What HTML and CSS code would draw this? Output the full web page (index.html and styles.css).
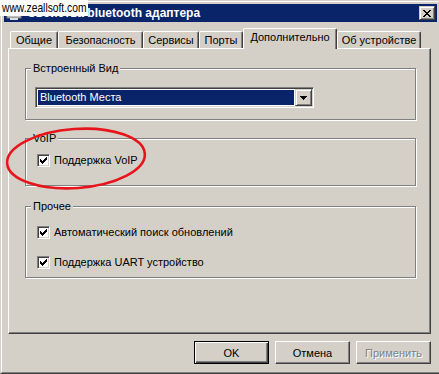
FILE: index.html
```html
<!DOCTYPE html>
<html lang="ru">
  <head>
    <meta charset="UTF-8" />
    <title>Свойства bluetooth адаптера</title>
    <link rel="stylesheet" href="styles.css">
  </head>
  <body>
    <div class="window">
      <div class="frame">
        <div class="titlebar">
          <svg class="title-icon" viewBox="0 0 16 16" width="16" height="16">
            <rect x="1" y="2" width="14" height="11" fill="#c0c0c0" stroke="#808080" />
            <rect x="3" y="4" width="10" height="7" fill="#ffffff" />
            <rect x="4" y="13" width="8" height="2" fill="#e0e0e0" />
          </svg>
          <span class="title-text">Свойства bluetooth адаптера</span>
          <button class="title-close">
            <svg viewBox="0 0 8 7" width="8" height="7" shape-rendering="crispEdges">
              <path d="M0 0h2v1h-2z M6 0h2v1h-2z M1 1h2v1h-2z M5 1h2v1h-2z M2 2h4v1h-4z M3 3h2v1h-2z M2 4h4v1h-4z M1 5h2v1h-2z M5 5h2v1h-2z M0 6h2v1h-2z M6 6h2v1h-2z" fill="#000" />
            </svg>
          </button>
        </div>

        <div class="tabs">
          <div class="tab tab-general">Общие</div>
          <div class="tab tab-security">Безопасность</div>
          <div class="tab tab-services">Сервисы</div>
          <div class="tab tab-ports">Порты</div>
          <div class="tab tab-extra tab-active">Дополнительно</div>
          <div class="tab tab-device">Об устройстве</div>
        </div>

        <div class="page">
          <div class="group group-view">
            <div class="group-title">Встроенный Вид</div>
            <div class="combo">
              <div class="combo-value">Bluetooth Места</div>
              <div class="combo-button">
                <svg viewBox="0 0 7 4" width="7" height="4" shape-rendering="crispEdges">
                  <path d="M0 0h7v1h-7z M1 1h5v1h-5z M2 2h3v1h-3z M3 3h1v1h-1z" fill="#000" />
                </svg>
              </div>
            </div>
          </div>

          <div class="group group-voip">
            <div class="group-title">VoIP</div>
            <label class="check">
              <span class="checkbox">
                <svg viewBox="0 0 7 7" width="7" height="7" shape-rendering="crispEdges">
                  <path d="M6 0h1v1h-1z M5 1h2v1h-2z M0 2h1v1h-1z M4 2h3v1h-3z M0 3h2v1h-2z M3 3h3v1h-3z M0 4h5v1h-5z M1 5h3v1h-3z M2 6h1v1h-1z" fill="#000" />
                </svg>
              </span>
              <span class="check-text">Поддержка VoIP</span>
            </label>
          </div>

          <div class="group group-misc">
            <div class="group-title">Прочее</div>
            <label class="check">
              <span class="checkbox">
                <svg viewBox="0 0 7 7" width="7" height="7" shape-rendering="crispEdges">
                  <path d="M6 0h1v1h-1z M5 1h2v1h-2z M0 2h1v1h-1z M4 2h3v1h-3z M0 3h2v1h-2z M3 3h3v1h-3z M0 4h5v1h-5z M1 5h3v1h-3z M2 6h1v1h-1z" fill="#000" />
                </svg>
              </span>
              <span class="check-text">Автоматический поиск обновлений</span>
            </label>
            <label class="check">
              <span class="checkbox">
                <svg viewBox="0 0 7 7" width="7" height="7" shape-rendering="crispEdges">
                  <path d="M6 0h1v1h-1z M5 1h2v1h-2z M0 2h1v1h-1z M4 2h3v1h-3z M0 3h2v1h-2z M3 3h3v1h-3z M0 4h5v1h-5z M1 5h3v1h-3z M2 6h1v1h-1z" fill="#000" />
                </svg>
              </span>
              <span class="check-text">Поддержка UART устройство</span>
            </label>
          </div>
        </div>

        <div class="actions">
          <button class="btn btn-default">OK</button>
          <button class="btn">Отмена</button>
          <button class="btn" disabled>Применить</button>
        </div>
      </div>
    </div>

    <!-- watermark and hand-drawn mark lie over the dialog -->
    <div class="watermark"><span>www.zeallsoft.com</span></div>
    <svg class="annotation" width="439" height="374" viewBox="0 0 439 374">
      <ellipse cx="76" cy="158.5" rx="69" ry="29.5" transform="rotate(-4 76 158.5)" fill="none" stroke="#e8141c" stroke-width="2.6" />
    </svg>
  </body>
</html>
```

FILE: styles.css
```css
* {
  box-sizing: border-box;
  margin: 0;
  padding: 0;
}

body {
  position: relative;
  width: 439px;
  height: 374px;
  overflow: hidden;
  background: #d4d0c8;
  color: #000;
  font-family: 'Liberation Sans', Arial, sans-serif;
  font-size: 11px;
}

.window {
  width: 441px;
  height: 374px;
  border: 1px solid;
  border-color: #d4d0c8 #404040 #404040 #d4d0c8;
}

.frame {
  height: 100%;
  display: flex;
  flex-direction: column;
  border: 1px solid;
  border-color: #fff #808080 #808080 #fff;
  padding: 2px;
}

/* caption */
.titlebar {
  height: 18px;
  flex-shrink: 0;
  display: flex;
  align-items: center;
  background: #0a246a;
  color: #fff;
}

.title-icon {
  margin: 0 5px 0 2px;
}

.title-text {
  flex: 1;
  font-size: 12px;
  font-weight: bold;
  white-space: nowrap;
}

.title-close {
  width: 16px;
  height: 14px;
  margin-right: 2px;
  display: flex;
  align-items: center;
  justify-content: center;
  background: #d4d0c8;
  border: 1px solid;
  border-color: #d4d0c8 #404040 #404040 #d4d0c8;
  box-shadow: inset 1px 1px #fff, inset -1px -1px #808080;
}

/* tab strip */
.tabs {
  height: 20px;
  flex-shrink: 0;
  display: flex;
  align-items: flex-end;
  margin: 6px 0 0 6px;
}

.tab {
  height: 17px;
  padding-top: 2px;
  text-align: center;
  white-space: nowrap;
  background: #d4d0c8;
  border: 1px solid;
  border-bottom: 0;
  border-color: #fff #404040 transparent #fff;
  border-radius: 2px 2px 0 0;
  box-shadow: inset -1px 0 #808080;
}

.tab-active {
  position: relative;
  z-index: 1;
  height: 21px;
  margin-bottom: -1px;
}

.tab-general { width: 48px; }
.tab-security { width: 85px; }
.tab-services { width: 56px; }
.tab-ports { width: 44px; }
.tab-extra { width: 94px; }
.tab-device { width: 84px; }

.page {
  width: 423px;
  height: 286px;
  flex-shrink: 0;
  margin-left: 4px;
  padding: 19px 14px 0 16px;
  border: 1px solid;
  border-color: #fff #404040 #404040 #fff;
  box-shadow: inset -1px -1px #808080;
}

/* etched group boxes */
.group {
  border: 1px solid #808080;
  box-shadow: inset 1px 1px #fff, 1px 1px #fff;
}

.group-view { height: 52px; }
.group-voip { height: 48px; margin-top: 18px; }
.group-misc { height: 72px; margin-top: 20px; }

.group-title {
  width: fit-content;
  margin: -7px 0 0 5px;
  padding: 0 2px;
  line-height: 13px;
  background: #d4d0c8;
}

.combo {
  width: 279px;
  height: 21px;
  display: flex;
  margin: 12px 0 0 9px;
  padding: 1px;
  background: #fff;
  border: 1px solid;
  border-color: #808080 #fff #fff #808080;
  box-shadow: inset 1px 1px #404040, inset -1px -1px #d4d0c8;
}

.combo-value {
  flex: 1;
  margin: 1px;
  padding-left: 2px;
  line-height: 15px;
  background: #0a246a;
  color: #fff;
}

.combo-button {
  width: 17px;
  display: flex;
  align-items: center;
  justify-content: center;
  background: #d4d0c8;
  border: 1px solid;
  border-color: #d4d0c8 #404040 #404040 #d4d0c8;
  box-shadow: inset 1px 1px #fff, inset -1px -1px #808080;
}

.check {
  display: flex;
  align-items: center;
  gap: 4px;
  margin-left: 11px;
  line-height: 13px;
}

.group-voip .check { margin-top: 8px; }
.group-misc .check { margin-top: 12px; }
.group-misc .check + .check { margin-top: 16px; }

.checkbox {
  width: 13px;
  height: 13px;
  padding: 2px;
  background: #fff;
  border: 1px solid;
  border-color: #808080 #fff #fff #808080;
  box-shadow: inset 1px 1px #404040, inset -1px -1px #d4d0c8;
}

.checkbox svg {
  display: block;
}

.check-text {
  padding-top: 1px;
}

/* dialog buttons */
.actions {
  display: flex;
  justify-content: flex-end;
  gap: 6px;
  margin-top: 7px;
  padding-right: 6px;
}

.btn {
  width: 75px;
  height: 23px;
  font: inherit;
  color: #000;
  background: #d4d0c8;
  border: 1px solid;
  border-color: #fff #404040 #404040 #fff;
  box-shadow: inset -1px -1px #808080;
}

.btn-default {
  border-color: #000;
  box-shadow: inset 1px 1px #fff, inset -1px -1px #404040, inset -2px -2px #808080;
}

.btn:disabled {
  color: #808080;
  text-shadow: 1px 1px #fff;
}

.watermark {
  position: absolute;
  left: 0;
  top: 0;
  width: 88px;
  height: 16px;
  padding-left: 2px;
  background: #fff;
  color: #000;
  font-size: 13px;
  line-height: 16px;
  white-space: nowrap;
}

.watermark span {
  display: inline-block;
  transform: scaleX(0.79);
  transform-origin: left center;
}

.annotation {
  position: absolute;
  left: 0;
  top: 0;
  pointer-events: none;
}
```
